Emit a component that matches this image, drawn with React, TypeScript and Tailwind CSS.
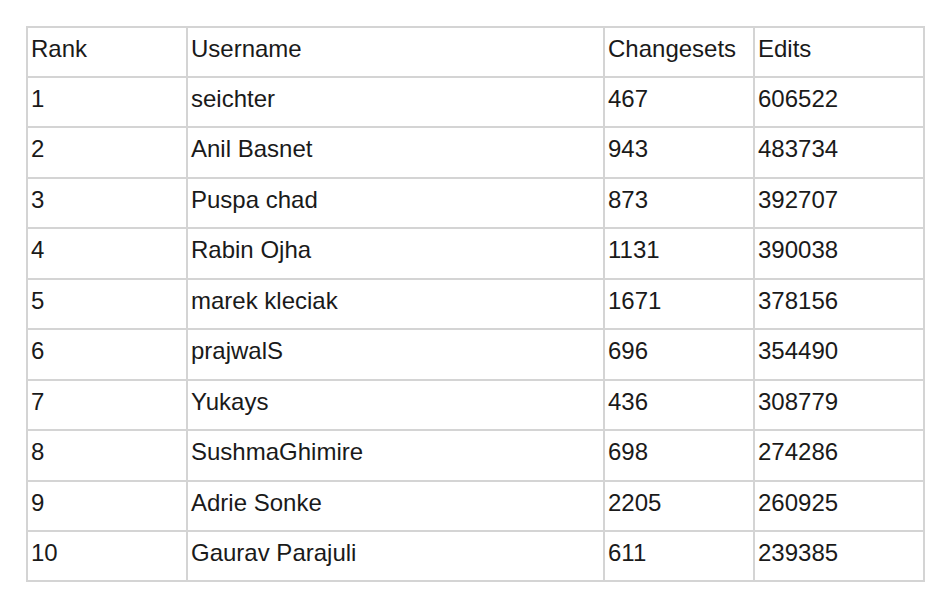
import React from "react";

const rows: [string, string, string, string][] = [
  ["Rank", "Username", "Changesets", "Edits"],
  ["1", "seichter", "467", "606522"],
  ["2", "Anil Basnet", "943", "483734"],
  ["3", "Puspa chad", "873", "392707"],
  ["4", "Rabin Ojha", "1131", "390038"],
  ["5", "marek kleciak", "1671", "378156"],
  ["6", "prajwalS", "696", "354490"],
  ["7", "Yukays", "436", "308779"],
  ["8", "SushmaGhimire", "698", "274286"],
  ["9", "Adrie Sonke", "2205", "260925"],
  ["10", "Gaurav Parajuli", "611", "239385"],
];

const cell =
  "border-r-2 border-b-2 border-[#d4d4d4] pl-[3px] pt-[7px] leading-[27px] whitespace-nowrap";

export default function App() {
  return (
    <div
      className="w-[936px] h-[600px] bg-white pt-[26px] pl-[26px] text-[24px] text-[#1a1a1a]"
      style={{ fontFamily: '"Liberation Sans", Arial, sans-serif' }}
    >
      <div className="grid w-[899px] grid-cols-[160px_417px_150px_170px] grid-rows-[50px_50px_51px_50px_51px_50px_51px_50px_51px_50px_50px] border-l-2 border-t-2 border-[#d4d4d4]">
        {rows.map((r, i) => (
          <React.Fragment key={i}>
            <div className={cell}>{r[0]}</div>
            <div className={cell}>{r[1]}</div>
            <div className={cell}>{r[2]}</div>
            <div className={cell}>{r[3]}</div>
          </React.Fragment>
        ))}
      </div>
    </div>
  );
}
